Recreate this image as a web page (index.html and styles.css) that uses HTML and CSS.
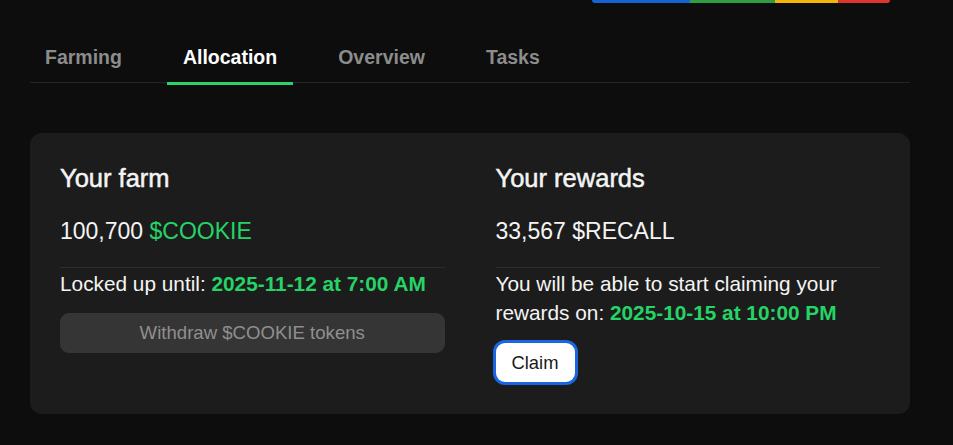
FILE: index.html
```html
<!DOCTYPE html>
<html lang="en">
<head>
<meta charset="utf-8">
<title>Allocation</title>
<link rel="stylesheet" href="styles.css">
</head>
<body>
<div class="page">
  <div class="brand-bar">
    <span class="seg seg-blue"></span><span class="seg seg-green"></span><span class="seg seg-yellow"></span><span class="seg seg-red"></span>
  </div>
  <nav class="tabs">
    <a class="tab">Farming</a>
    <a class="tab active">Allocation</a>
    <a class="tab">Overview</a>
    <a class="tab">Tasks</a>
  </nav>
  <section class="card">
    <div class="col">
      <h2 class="title">Your farm</h2>
      <div class="amount">100,700 <span class="green">$COOKIE</span></div>
      <p class="info">Locked up until: <strong class="green">2025-11-12 at 7:00 AM</strong></p>
      <button class="btn-disabled" disabled>Withdraw $COOKIE tokens</button>
    </div>
    <div class="col">
      <h2 class="title">Your rewards</h2>
      <div class="amount">33,567 $RECALL</div>
      <p class="info">You will be able to start claiming your rewards on: <strong class="green">2025-10-15 at 10:00 PM</strong></p>
      <div class="claim-row"><button class="btn-claim">Claim</button></div>
    </div>
  </section>
</div>
</body>
</html>
```
FILE: styles.css
```css
html, body {
  margin: 0;
  padding: 0;
  background: #0d0d0d;
  font-family: "Liberation Sans", Arial, sans-serif;
  color: #f4f4f4;
}
.page {
  width: 880px;
  padding: 0 43px 0 30px;
}
.brand-bar {
  display: flex;
  margin-left: 562px;
  width: 298px;
  height: 3px;
  border-radius: 0 0 8px 8px;
  overflow: hidden;
}
.seg { display: block; height: 100%; }
.seg-blue { width: 98px; background: #1464d4; }
.seg-green { width: 85px; background: #2f9d42; }
.seg-yellow { width: 63px; background: #f4b50a; }
.seg-red { width: 52px; background: #e0352c; }

.tabs {
  display: flex;
  gap: 29px;
  margin-top: 41px;
  border-bottom: 1px solid #242424;
}
.tab {
  padding: 0 16px 12px;
  margin-bottom: -3px;
  font-size: 19.5px;
  line-height: 26px;
  font-weight: 700;
  color: #8c8c8c;
  border-bottom: 3px solid transparent;
}
.tab:first-child { padding-left: 15px; }
.tab.active {
  color: #ffffff;
  border-bottom-color: #28d46a;
}

.card {
  margin-top: 50px;
  background: #1c1c1c;
  border-radius: 12px;
  padding: 30px 30px 32px;
  display: grid;
  grid-template-columns: 1fr 1fr;
  column-gap: 51px;
  align-items: start;
}
.title {
  margin: 0;
  font-size: 25.5px;
  line-height: 30px;
  font-weight: 400;
  -webkit-text-stroke: 0.5px #f4f4f4;
  color: #f4f4f4;
}
.amount {
  margin-top: 24px;
  font-size: 23px;
  line-height: 28px;
  padding-bottom: 22px;
  border-bottom: 1px solid #2c2c2c;
}
.green { color: #25d366; }
.info {
  margin: 1px 0 0;
  font-size: 20.8px;
  line-height: 29px;
}
.info strong {
  font-weight: 700;
}
.btn-disabled {
  display: block;
  width: 100%;
  height: 40px;
  margin-top: 15px;
  border: none;
  border-radius: 9px;
  background: #353535;
  color: #8f8f8f;
  font-family: "Liberation Sans", Arial, sans-serif;
  font-size: 18.6px;
}
.claim-row {
  margin-top: 16px;
}
.btn-claim {
  display: block;
  height: 39px;
  width: 79px;
  border: none;
  border-radius: 9px;
  background: #ffffff;
  color: #1a1a1a;
  font-family: "Liberation Sans", Arial, sans-serif;
  font-size: 18.4px;
  box-shadow: 0 0 0 3px #1a66e0;
}
```
